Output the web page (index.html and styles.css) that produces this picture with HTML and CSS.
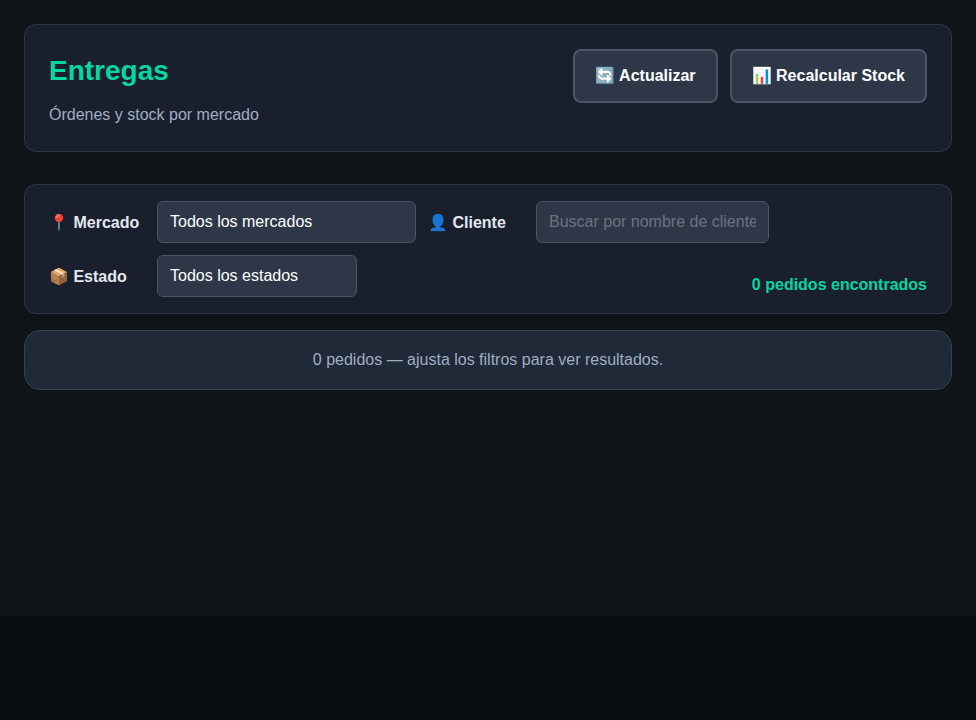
FILE: index.html
```html
<!DOCTYPE html>
<html lang="es">
<head>
<meta charset="utf-8">
<title>Entregas</title>
<link rel="stylesheet" href="styles.css">
</head>
<body>
<main class="page">
  <header class="card header">
    <div>
      <h1 class="title">Entregas</h1>
      <p class="subtitle">Órdenes y stock por mercado</p>
    </div>
    <div class="actions">
      <button class="btn" type="button">🔄 Actualizar</button>
      <button class="btn" type="button">📊 Recalcular Stock</button>
    </div>
  </header>
  <section class="card filters">
    <div class="fields">
      <label class="label" for="market">📍 Mercado</label>
      <select class="control market" id="market"><option>Todos los mercados</option></select>
      <label class="label" for="client">👤 Cliente</label>
      <input class="control client" id="client" type="text" placeholder="Buscar por nombre de cliente">
      <label class="label" for="status">📦 Estado</label>
      <select class="control status" id="status"><option>Todos los estados</option></select>
    </div>
    <div class="count">0 pedidos encontrados</div>
  </section>
  <section class="empty">0 pedidos — ajusta los filtros para ver resultados.</section>
</main>
</body>
</html>
```
FILE: styles.css
```css
* { box-sizing: border-box; }
body {
  margin: 0;
  min-height: 100vh;
  background: #0a0d12;
  color: #e2e8f0;
  font: 16px/24px "Liberation Sans", Arial, sans-serif;
}
.page {
  min-height: 616px;
  padding: 24px;
  background: #0f1419;
}
.card {
  display: flex;
  justify-content: space-between;
  background: #1a1f2e;
  border: 1px solid #2d3748;
  border-radius: 12px;
}
.header {
  height: 128px;
  padding: 24px;
  margin-bottom: 32px;
}
.title {
  margin: 0 0 8px;
  color: #06d6a0;
  font-size: 28px;
  line-height: 44px;
}
.subtitle { margin: 0; color: #a0aec0; line-height: 28px; }
.actions { display: flex; gap: 12px; align-items: flex-start; }
.btn {
  height: 54px;
  padding: 0 20px 2px;
  background: #2d3748;
  border: 2px solid #4a5568;
  border-radius: 8px;
  color: #fff;
  font: bold 16px "Liberation Sans", Arial, sans-serif;
}
.filters {
  height: 130px;
  padding: 16px 24px;
  margin-bottom: 16px;
  align-items: flex-end;
}
.fields {
  display: grid;
  grid-template-columns: 96px 259px 96px 233px;
  gap: 12px;
  align-items: center;
}
.label { padding-top: 2px; font-weight: bold; white-space: nowrap; }
.control {
  appearance: none;
  width: 100%;
  height: 42px;
  padding: 0 12px;
  background: #2d3748;
  border: 1px solid #4a5568;
  border-radius: 6px;
  color: #fff;
  font: 16px "Liberation Sans", Arial, sans-serif;
}
select.control { padding-bottom: 2px; }
.control::placeholder { color: #6b7280; }
.status { width: 200px; }
.count { color: #06d6a0; font-weight: bold; white-space: nowrap; width: 0; display: flex; justify-content: flex-end; }
.empty {
  height: 60px;
  display: flex;
  align-items: center;
  justify-content: center;
  background: #1f2937;
  border: 1px solid #374151;
  border-radius: 16px;
  color: #a0aec0;
}
```
